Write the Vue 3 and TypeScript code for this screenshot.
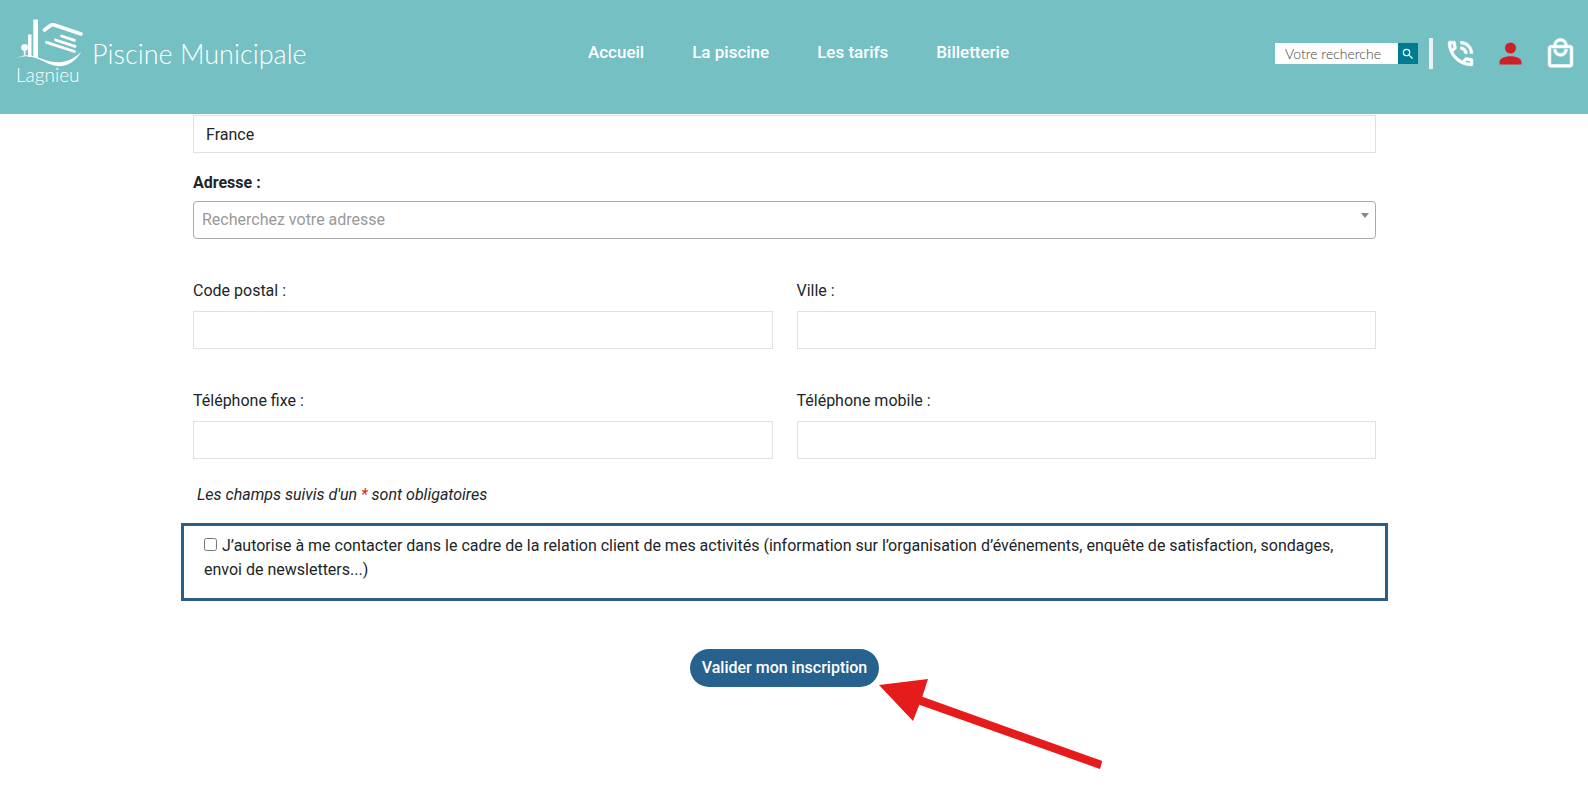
<script setup lang="ts">
import { ref } from 'vue'

interface Field {
  id: string
  label: string
  type: string
}

const links: string[] = ['Accueil', 'La piscine', 'Les tarifs', 'Billetterie']

const fields: Field[] = [
  { id: 'code-postal', label: 'Code postal :', type: 'text' },
  { id: 'ville', label: 'Ville :', type: 'text' },
  { id: 'tel-fixe', label: 'Téléphone fixe :', type: 'tel' },
  { id: 'tel-mobile', label: 'Téléphone mobile :', type: 'tel' },
]

const values = ref<Record<string, string>>({})
const country = ref('France')
const address = ref('')
const search = ref('')
const consent = ref(false)
</script>

<template>
  <div class="page">
    <header class="header">
      <a class="brand" href="#">
        <span class="logo">
          <svg width="68" height="48" viewBox="0 0 68 48" fill="none" stroke="#fff" aria-hidden="true">
            <path d="M17.300 .5h4.700v39l-4.700-1.500z" fill="#fff" stroke="none" />
            <path d="M12 15.500h3.500v22.500h-3.500z" fill="#fff" stroke="none" />
            <circle cx="8.600" cy="28.500" r="3.400" fill="#fff" stroke="none" />
            <path d="M8.600 30v6.500" stroke-width="1.600" />
            <path d="M0 39.500C5 36.500 11 35 19 37.500C28 40.500 34 43.500 44 43.200C53 42.500 60 38 65.500 32.500C60 42 52 47.500 42 47.200C31 46.500 26 39.500 14 37.600C9 36.800 5 37.500 0 39.500Z" fill="#fff" stroke="none" />
            <path d="M28.500 11L34 6.800Q36 5.300 38.500 6L65 15" stroke-width="3.600" stroke-linecap="round" />
            <path d="M45.500 17L58.500 21.300M39.500 21L59 27.300M30.500 23.300L58.500 32.500" stroke-width="2.800" stroke-linecap="round" />
          </svg>
          <span class="town">Lagnieu</span>
        </span>
        <span class="title">Piscine Municipale</span>
      </a>

      <nav class="nav">
        <a v-for="link in links" :key="link" href="#">{{ link }}</a>
      </nav>

      <div class="tools">
        <form class="search" role="search" @submit.prevent>
          <input v-model="search" type="text" placeholder="Votre recherche" aria-label="Votre recherche" />
          <button type="submit" aria-label="Rechercher">
            <svg width="14" height="14" viewBox="0 0 24 24" fill="#fff"><path d="M15.500 14h-.79l-.28-.27A6.470 6.470 0 0 0 16 9.500 6.500 6.500 0 1 0 9.500 16c1.610 0 3.090-.59 4.230-1.570l.27.28v.79l5 4.990L20.490 19l-4.990-5zm-6 0C7.010 14 5 11.990 5 9.500S7.010 5 9.500 5 14 7.010 14 9.500 11.990 14 9.500 14z" /></svg>
          </button>
        </form>
        <span class="divider"></span>
        <div class="icons">
          <a href="#" aria-label="Contact">
            <svg viewBox="0 0 24 24" fill="#fff" stroke="#fff" stroke-width=".4"><path d="M20 15.500C18.800 15.500 17.500 15.300 16.400 14.900H16.100C15.800 14.900 15.600 15 15.400 15.200L13.200 17.400C10.400 15.900 8 13.600 6.600 10.800L8.800 8.600C9.100 8.300 9.200 7.900 9 7.600C8.700 6.500 8.500 5.200 8.500 4C8.500 3.500 8 3 7.500 3H4C3.500 3 3 3.500 3 4C3 13.400 10.600 21 20 21C20.500 21 21 20.500 21 20V16.500C21 16 20.500 15.500 20 15.500M5 5H6.500C6.600 5.900 6.800 6.800 7 7.600L5.800 8.800C5.400 7.600 5.100 6.300 5 5M19 19C17.700 18.900 16.400 18.600 15.200 18.200L16.400 17C17.200 17.200 18.100 17.400 19 17.400V19M15 12H17C17 9.200 14.800 7 12 7V9C13.700 9 15 10.300 15 12M19 12H21C21 7 17 3 12 3V5C15.900 5 19 8.100 19 12Z" /></svg>
          </a>
          <a href="#" aria-label="Mon compte">
            <svg viewBox="0 0 24 24" fill="#d01f28"><path d="M12 4a4 4 0 1 1 0 8 4 4 0 0 1 0-8zm0 10c4.420 0 8 1.790 8 4v2H4v-2c0-2.210 3.580-4 8-4z" /></svg>
          </a>
          <a href="#" aria-label="Panier">
            <svg viewBox="0 0 24 24" fill="#fff" stroke="#fff" stroke-width=".4"><path d="M19 6H17C17 3.200 14.800 1 12 1S7 3.200 7 6H5C3.900 6 3 6.900 3 8V20C3 21.100 3.900 22 5 22H19C20.100 22 21 21.100 21 20V8C21 6.900 20.100 6 19 6M12 3C13.700 3 15 4.300 15 6H9C9 4.300 10.300 3 12 3M19 20H5V8H19V20M12 12C10.300 12 9 10.700 9 9H7C7 11.800 9.200 14 12 14S17 11.800 17 9H15C15 10.700 13.700 12 12 12Z" /></svg>
          </a>
        </div>
      </div>
    </header>

    <main class="main">
      <form @submit.prevent>
        <div class="fields">
          <input v-model="country" class="box" type="text" aria-label="Pays" />

          <div class="address">
            <label for="adresse">Adresse :</label>
            <div class="select">
              <select id="adresse" v-model="address">
                <option value="">Recherchez votre adresse</option>
              </select>
            </div>
          </div>

          <div class="grid">
            <div v-for="field in fields" :key="field.id" class="field">
              <label :for="field.id">{{ field.label }}</label>
              <input :id="field.id" v-model="values[field.id]" class="box" :type="field.type" />
            </div>
          </div>

          <p class="note">Les champs suivis d'un <span class="star">*</span> sont obligatoires</p>
        </div>

        <div class="consent">
          <input id="consent" v-model="consent" type="checkbox" />
          <label for="consent">J’autorise à me contacter dans le cadre de la relation client de mes activités (information sur l’organisation d’événements, enquête de satisfaction, sondages, envoi de newsletters...)</label>
        </div>

        <div class="actions">
          <div class="submit">
            <button type="submit">Valider mon inscription</button>
            <svg class="arrow" width="224" height="93" viewBox="0 0 224 93" fill="#e61b1b" aria-hidden="true">
              <path d="M0 8L49 2L43.300 19.700L223.300 84L221 92L40.300 27.700L34 44Z" />
            </svg>
          </div>
        </div>
      </form>
    </main>
  </div>
</template>

<style>
body {
  margin: 0;
  background: #fff;
}
</style>

<style scoped>
.page {
  font-family: Roboto, "Liberation Sans", sans-serif;
  font-size: 16px;
  line-height: 24px;
  color: #212529;
}

.page * {
  box-sizing: border-box;
}

input,
select,
button {
  font: inherit;
  color: inherit;
}

.header {
  display: grid;
  grid-template-columns: 1fr auto 1fr;
  align-items: center;
  height: 114px;
  padding: 0 11px 7px 16px;
  background: #75c0c3;
}

.brand {
  display: flex;
  align-items: center;
  gap: 8px;
  font-family: Lato, sans-serif;
  font-weight: 300;
  color: #fff;
  text-decoration: none;
}

.logo {
  display: flex;
  flex-direction: column;
  padding-bottom: 6px;
}

.town {
  font-size: 19px;
  line-height: 15px;
}

.title {
  font-size: 27px;
  line-height: 32px;
  white-space: nowrap;
}

.nav {
  display: flex;
  gap: 48px;
  padding: 0 0 3px 4px;
}

.nav a {
  font-size: 17px;
  font-weight: 500;
  color: #fff;
  text-decoration: none;
  white-space: nowrap;
}

.tools {
  display: flex;
  align-items: center;
  justify-content: flex-end;
  gap: 11px;
}

.search {
  display: flex;
  height: 21px;
}

.search input {
  width: 123px;
  padding: 0 10px;
  border: 0;
  background: #fff;
  font-family: Lato, sans-serif;
  font-size: 14px;
  font-weight: 300;
  color: #444;
}

.search input::placeholder {
  color: #444;
  opacity: 1;
}

.search button {
  display: flex;
  align-items: center;
  justify-content: center;
  width: 20px;
  padding: 0;
  border: 0;
  background: #007c92;
}

.divider {
  width: 4px;
  height: 31px;
  background: #eaf1f1;
}

.icons {
  display: flex;
  gap: 17px;
}

.icons a,
.icons svg {
  display: block;
  width: 33px;
  height: 33px;
}

.main {
  padding: 1px 200px 107px 181px;
}

.fields {
  padding: 0 12px;
}

.box {
  display: block;
  width: 100%;
  height: 38px;
  padding: 0 12px;
  border: 1px solid #dee2e6;
  border-radius: 0;
  background: #fff;
}

.address {
  margin: 18px 0 40px;
}

.address label {
  display: block;
  margin-bottom: 6px;
  font-weight: 700;
}

.select {
  position: relative;
}

.select::after {
  content: "";
  position: absolute;
  top: 12px;
  right: 7px;
  border: 4px solid transparent;
  border-top: 5px solid #888;
  border-bottom: 0;
  pointer-events: none;
}

.select select {
  display: block;
  width: 100%;
  height: 38px;
  padding: 0 24px 0 8px;
  border: 1px solid #aaa;
  border-radius: 4px;
  background: #fff;
  color: #999;
  appearance: none;
}

.grid {
  display: grid;
  grid-template-columns: 1fr 1fr;
  gap: 40px 24px;
}

.field label {
  display: block;
  margin-bottom: 8px;
}

.note {
  margin: 24px 0 16px;
  padding-left: 4px;
  font-style: italic;
}

.star {
  color: #e61b1b;
}

.consent {
  padding: 8px 20px 16px;
  border: 3px solid #2b5f86;
}

.consent input {
  width: 13px;
  height: 13px;
  margin: 0 5px 0 0;
  vertical-align: baseline;
}

.actions {
  display: flex;
  justify-content: center;
  margin-top: 48px;
}

.submit {
  position: relative;
}

.submit button {
  display: block;
  height: 38px;
  padding: 0 12px;
  border: 0;
  border-radius: 19px;
  background: #27628f;
  font-weight: 500;
  color: #fff;
}

.arrow {
  position: absolute;
  top: 28px;
  left: 100%;
}
</style>
